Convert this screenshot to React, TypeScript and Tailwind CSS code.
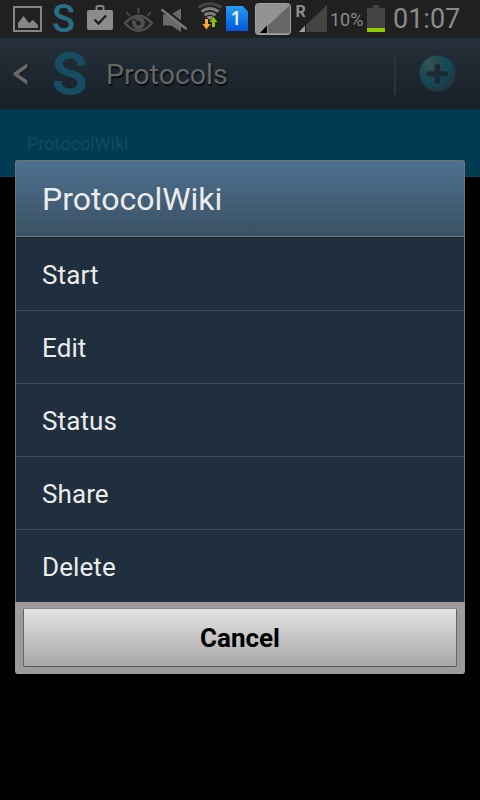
import React from "react";

const actions = ["Start", "Edit", "Status", "Share", "Delete"];

function PictureIcon() {
  return (
    <svg className="ml-[13px] h-[38px] w-[29px] shrink-0" viewBox="13 0 29 38">
      <rect x="14" y="7" width="27" height="24" fill="none" stroke="#858585" strokeWidth="2" />
      <path d="M18 28v-5l5.500-7 5.500 7 4-3 5 5v3z" fill="#858585" />
    </svg>
  );
}

function BagIcon() {
  return (
    <svg className="ml-[10px] h-[38px] w-[26px] shrink-0" viewBox="87 0 26 38">
      <path d="M96.500 11V7.500q0-1.500 1.500-1.500h4q1.500 0 1.500 1.500V11" fill="none" stroke="#858585" strokeWidth="2" />
      <rect x="87" y="10" width="26" height="20" rx="2" fill="#8c8c8c" />
      <path d="M94.500 19.500l4 4 7.500-8" fill="none" stroke="#202020" strokeWidth="2.400" />
    </svg>
  );
}

function EyeIcon() {
  return (
    <svg className="ml-[10px] h-[38px] w-[31px] shrink-0" viewBox="123 0 31 38">
      <path d="M125 23.200q13.500-15 27 0-13.500 15-27 0z" fill="none" stroke="#505050" strokeWidth="2.400" />
      <circle cx="138.500" cy="23" r="6.500" fill="#505050" />
      <circle cx="138.500" cy="23.200" r="2.300" fill="#202020" />
      <path d="M134.500 19.500l4 3.500" stroke="#202020" strokeWidth="1.500" />
      <path d="M138.500 7.500v5.500M126 12l4 4M151 12l-4 4" stroke="#505050" strokeWidth="1.700" />
    </svg>
  );
}

function MuteIcon() {
  return (
    <svg className="ml-[7px] h-[38px] w-[27px] shrink-0" viewBox="161 0 27 38">
      <path d="M163 14.500h8l10-6v23.500l-10-6.500h-8z" fill="#6a6a6a" />
      <path d="M163 8l24 19.500" stroke="#202020" strokeWidth="3" />
      <path d="M161.500 9.500l25 19.500" stroke="#777" strokeWidth="2.500" />
    </svg>
  );
}

function WifiIcon() {
  return (
    <svg className="ml-[9px] h-[38px] w-[26px] shrink-0" viewBox="197 0 26 38">
      <g fill="none" strokeWidth="3">
        <path d="M198.500 7.500q11.500-7.500 23 0" stroke="#444" />
        <path d="M201.500 11.500q8.500-6 17 0M204.500 15.200q5.500-4 11 0" stroke="#7d7d7d" />
      </g>
      <path d="M206.500 17q3.500-2 7 0l-3.500 3z" fill="#929292" />
      <path d="M205 19h3v5h2.500l-4 5.500-4-5.500h2.500z" fill="#ffa23b" />
      <path d="M212 27v-5h-2.500l4-5 4 5H215v5z" fill="#8bc400" />
    </svg>
  );
}

function SimIcon() {
  return (
    <div className="ml-[3px] mt-[6px] h-[25px] w-[22px] shrink-0 bg-linear-to-b from-[#2a9cf0] to-[#0755dc] pr-[2px] text-center font-['Open_Sans',sans-serif] text-[19px] leading-[25px] font-semibold text-[#e8f2ff] [clip-path:polygon(0_0,76%_0,100%_22%,100%_100%,0_100%)]">
      1
    </div>
  );
}

function SignalIcons() {
  return (
    <svg className="ml-[7px] h-[38px] w-[72px] shrink-0" viewBox="255 0 72 38">
      <rect x="255.500" y="3.500" width="35" height="31" rx="3" fill="#929292" stroke="#a0a0a0" />
      <path d="M290 5v26q0 2-2 2h-28z" fill="#666" />
      <path d="M260 33l7-7.500V33z" fill="#000" />
      <path d="M267.500 25v8" stroke="#929292" />
      <path d="M306 25l21-20v27h-21z" fill="#444" />
      <path d="M299 32l6-6.500V32z" fill="#a0a0a0" />
      <path d="M305.500 25v7" stroke="#101010" />
      <text x="295.500" y="17" fill="#8e8e8e" fontFamily="Roboto, sans-serif" fontWeight="700" fontSize="16">R</text>
    </svg>
  );
}

function StatusBar() {
  return (
    <div className="flex h-[38px] shrink-0 bg-[#202020] text-[#8b8b8b]">
      <PictureIcon />
      <span className="ml-[10px] w-[25px] shrink-0 text-[38px] leading-[38px] font-medium text-[#286c87]">S</span>
      <BagIcon />
      <EyeIcon />
      <MuteIcon />
      <WifiIcon />
      <SimIcon />
      <SignalIcons />
      <span className="ml-[3px] w-[36px] shrink-0 text-[18px] leading-[40px]">10%</span>
      <svg className="ml-px h-[38px] w-[18px] shrink-0" viewBox="367 0 18 38">
        <path d="M367 8h6V5h6v3h6v20h-18z" fill="#444" />
        <path d="M367 28h18v4h-18z" fill="#92c900" />
      </svg>
      <span className="ml-[8px] text-[27px] leading-[38px]">01:07</span>
    </div>
  );
}

function ActionBar() {
  return (
    <header className="flex h-[72px] shrink-0 items-center border-b border-[#1b2934] bg-linear-to-b from-[#25303a] to-[#182027]">
      <svg className="ml-[13px] h-[24px] w-[16px] shrink-0" viewBox="0 0 16 24">
        <path d="M16 2v4L7 12.500l9 7v4L2 13.500v-2z" fill="#11171c" />
        <path d="M14.500 1v4.500L5.500 12l9 6.500V23L.5 13v-2z" fill="#686868" />
      </svg>
      <span className="ml-[23px] w-[36px] shrink-0 text-[58px] leading-[72px] font-medium text-[#174d63] [-webkit-text-stroke:1px_#174d63]">S</span>
      <h1 className="ml-[18px] pt-[2px] text-[28.500px] leading-[70px] text-[#656565] [text-shadow:1px_2px_1px_#080b0e]">Protocols</h1>
      <div className="mr-[23px] ml-auto h-[42px] w-[2px] bg-[#2b343d]" />
      <svg className="mr-[24px] h-[38px] w-[37px] shrink-0" viewBox="0 0 37 38">
        <defs>
          <radialGradient id="orb" cx="28%" cy="20%" r="85%">
            <stop offset="0" stopColor="#365255" />
            <stop offset=".35" stopColor="#214c53" />
            <stop offset=".7" stopColor="#124656" />
            <stop offset="1" stopColor="#25343d" />
          </radialGradient>
        </defs>
        <circle cx="18.500" cy="18.500" r="18" fill="url(#orb)" />
        <path d="M18.500 11.500v15M10.500 19h16" stroke="#2c4d54" strokeWidth="6.500" strokeLinecap="round" />
        <path d="M18.500 11.500v15M10.500 19h16" stroke="#1c2a35" strokeWidth="5.500" strokeLinecap="round" />
      </svg>
    </header>
  );
}

function ActionDialog() {
  return (
    <section className="absolute top-[160px] left-[15px] flex h-[514px] w-[450px] flex-col overflow-hidden rounded-[3px] bg-[#9c9a9b]">
      <div className="h-[442px] shrink-0 border-x border-t border-[#737373] bg-[#1f2f3d]">
        <h2 className="h-[76px] border-b border-[#747b80] bg-linear-to-b from-[#4d7190] to-[#3a5163] pl-[26px] text-[32px] leading-[76px] text-[#ececec]">
          ProtocolWiki
        </h2>
        <ul className="border-t border-[#13202a]">
          {actions.map((action) => (
            <li key={action} className="h-[73px] border-b border-[#3c4b57] pl-[26px] text-[26px] leading-[75px] tracking-[0.1px] text-[#ececec] last:border-0">
              {action}
            </li>
          ))}
        </ul>
      </div>
      <button className="mx-[8px] mt-[6px] h-[59px] rounded-[2px] border border-t-[#888] border-r-[#666] border-b-[#555] border-l-[#666] bg-linear-to-b from-[#e3e3e3] to-[#a8a8a8] pt-[2px] text-[26px] leading-[55px] font-bold text-black">
        Cancel
      </button>
    </section>
  );
}

export default function App() {
  return (
    <main className="relative flex h-[800px] w-[480px] flex-col overflow-hidden bg-black font-[Roboto,sans-serif]">
      <StatusBar />
      <ActionBar />
      <div className="h-[67px] shrink-0 border-b border-[#07495c] bg-[#003c51] pl-[27px] text-[18px] leading-[68px] text-[#114b60]">
        ProtocolWiki
      </div>
      <ActionDialog />
    </main>
  );
}
